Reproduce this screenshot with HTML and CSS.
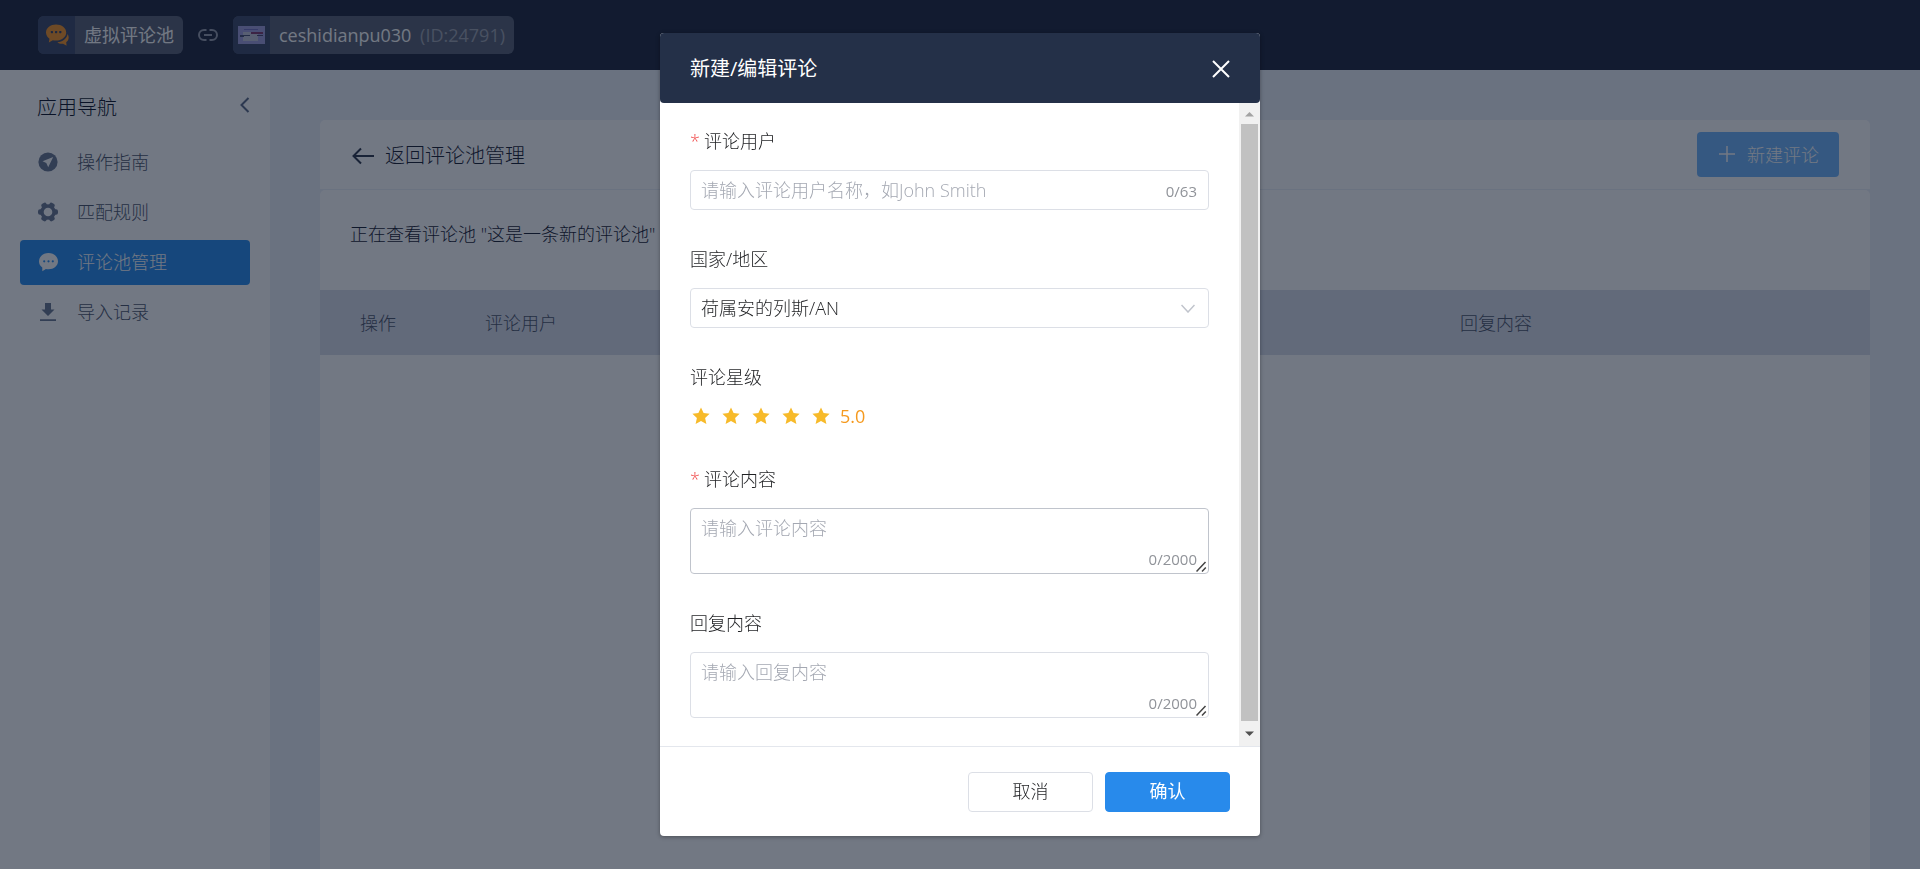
FILE: index.html
```html
<!DOCTYPE html>
<html lang="zh-CN">
<head>
<meta charset="utf-8">
<meta name="viewport" content="width=device-width, initial-scale=1">
<title>虚拟评论池</title>
<link rel="stylesheet" href="styles.css">
</head>
<body>
<div class="app">
  <header class="topbar">
    <div class="chip">
      <span class="chip-icon">
        <svg width="24" height="24" viewBox="0 0 24 24" fill="#f5962a"><path d="M11 1.500C5.500 1.500 1 4.900 1 9.500c0 2.600 1.400 4.700 3.500 6.200L3.800 19.500 7.800 17.200c1 .3 2.100.4 3.200.4 5.700 0 10.200-3.500 10.200-8.100S16.700 1.500 11 1.500z"/><path d="M22.600 11c-.8 4.600-5 7.800-10.200 8.200 1.300 1.300 3.500 1.800 5.600 1.500l3.600 2-.4-3.400c2.600-2 3.300-5.500 1.400-8.300z"/><g fill="#3d486a"><rect x="5.800" y="8" width="2.200" height="2.200" rx=".6"/><rect x="10" y="8" width="2.200" height="2.200" rx=".6"/><rect x="14.200" y="8" width="2.200" height="2.200" rx=".6"/></g></svg>
      </span>
      <span class="chip-text">虚拟评论池</span>
    </div>
    <svg class="link-icon" width="20" height="12" viewBox="0 0 20 12" fill="none" stroke="#9a9fae" stroke-width="2"><path d="M8.500 1H6a5 5 0 0 0 0 10h2.500M11.500 1H14a5 5 0 0 1 0 10h-2.500M6 6h8"/></svg>
    <div class="chip">
      <span class="chip-icon">
        <svg width="27" height="18" viewBox="0 0 27 18"><path fill="#a09fdc" d="M0 0h27v18H0z"/><path fill="#7674c4" d="M6 3h14v1H6z"/><path fill="#c4c6d8" d="M5 6h15v9H5z"/><path fill="#4d5478" d="M2 9h4v2H2zM6 9h6v1H6z"/><path fill="#843e70" d="M13 6h12v2H13z"/><path fill="#4f4a70" d="M19 9h6v1h-6z"/></svg>
      </span>
      <span class="chip-text">ceshidianpu030 <span class="chip-id">(ID:24791)</span></span>
    </div>
  </header>

  <div class="main">
    <aside class="sidebar">
      <div class="sidebar-head">
        <h2 class="sidebar-title">应用导航</h2>
        <button class="icon-button" type="button" aria-label="收起">
          <svg width="11" height="18" viewBox="0 0 11 18" fill="none" stroke="#5f6d8a" stroke-width="2"><path d="M9.500 2 2.500 9l7 7"/></svg>
        </button>
      </div>
      <nav class="nav">
        <a class="nav-item" href="#guide">
          <svg width="20" height="20" viewBox="0 0 20 20"><circle cx="10" cy="10" r="9.600" fill="#6d7a94"/><path fill="#fff" d="M15.200 5 4.500 9.300l3.800 1.600 1.900 4.300z"/></svg>
          操作指南</a>
        <a class="nav-item" href="#rules">
          <svg width="20" height="20" viewBox="0 0 20 20"><g fill="#6d7a94"><circle cx="10" cy="10" r="7.800"/><rect x="7.200" y="0" width="5.600" height="20" rx="2" transform="rotate(30 10 10)"/><rect x="7.200" y="0" width="5.600" height="20" rx="2" transform="rotate(90 10 10)"/><rect x="7.200" y="0" width="5.600" height="20" rx="2" transform="rotate(150 10 10)"/></g><circle cx="10" cy="10" r="4.300" fill="#fff"/></svg>
          匹配规则</a>
        <a class="nav-item nav-item-active" href="#pool" aria-current="page">
          <svg width="20" height="20" viewBox="0 0 20 20"><path fill="#fff" d="M10.500 1C5.200 1 1 4.600 1 9.200c0 2.700 1.300 4.900 3.300 6.300v3.700l3.600-2.300c.8.200 1.700.3 2.600.3 5.300 0 9.500-3.500 9.500-8S15.800 1 10.500 1z"/><g fill="#2d8fee"><circle cx="6.200" cy="9.300" r="1.100"/><circle cx="10.500" cy="9.300" r="1.100"/><circle cx="14.800" cy="9.300" r="1.100"/></g></svg>
          评论池管理</a>
        <a class="nav-item" href="#import">
          <svg width="20" height="20" viewBox="0 0 20 20" fill="#6d7a94"><path d="M7 1h6v6.500h3.500L10 14 3.500 7.500H7zM2 17.200h16v1.800H2z"/></svg>
          导入记录</a>
      </nav>
    </aside>

    <main class="content">
      <section class="panel panel-head">
        <a class="back" href="#pool">
          <svg width="24" height="18" viewBox="0 0 24 18" fill="none" stroke="#333d50" stroke-width="2"><path d="M23 9H3M10 1.500 2.500 9l7.500 7.500"/></svg>
          返回评论池管理</a>
        <button class="add-button" type="button">
          <svg width="16" height="16" viewBox="0 0 16 16" fill="none" stroke="#fff" stroke-width="1.500"><path d="M8 0v16M0 8h16"/></svg>
          新建评论</button>
      </section>
      <section class="panel panel-body">
        <p class="viewing">正在查看评论池 "这是一条新的评论池"</p>
        <table class="table">
          <thead>
            <tr><th class="col-action">操作</th><th class="col-user">评论用户</th><td></td><th class="col-reply">回复内容</th></tr>
          </thead>
        </table>
      </section>
    </main>
  </div>
</div>

<div class="overlay">
  <form class="dialog" role="dialog" aria-modal="true" aria-labelledby="dialog-title">
    <header class="dialog-head">
      <h1 class="dialog-title" id="dialog-title">新建/编辑评论</h1>
      <button class="icon-button" type="button" aria-label="关闭">
        <svg width="18" height="18" viewBox="0 0 18 18" fill="none" stroke="#fff" stroke-width="2"><path d="m1 1 16 16M17 1 1 17"/></svg>
      </button>
    </header>
    <div class="dialog-main">
      <div class="fields">
        <div class="field">
          <label class="label required" for="user">评论用户</label>
          <div class="control">
            <input class="box" id="user" type="text" maxlength="63" placeholder="请输入评论用户名称，如John Smith">
            <span class="count count-middle">0/63</span>
          </div>
        </div>
        <div class="field">
          <label class="label" for="country">国家/地区</label>
          <div class="control">
            <select class="box" id="country"><option>荷属安的列斯/AN</option></select>
            <svg class="caret" width="14" height="9" viewBox="0 0 14 9" fill="none" stroke="#c0c4cc" stroke-width="1.500"><path d="m.5 1 6.500 7 6.500-7"/></svg>
          </div>
        </div>
        <fieldset class="field">
          <legend class="label">评论星级</legend>
          <div class="stars">
            <label class="star"><input class="star-input" type="radio" name="stars" aria-label="1 星"><svg width="18" height="18" viewBox="0 0 18 18"><path d="m9 .5 2.600 5.600 6 .7-4.500 4.100 1.300 6.100L9 14l-5.400 3 1.300-6.100L.4 6.800l6-.7z"/></svg></label>
            <label class="star"><input class="star-input" type="radio" name="stars" aria-label="2 星"><svg width="18" height="18" viewBox="0 0 18 18"><path d="m9 .5 2.600 5.600 6 .7-4.500 4.100 1.300 6.100L9 14l-5.400 3 1.300-6.100L.4 6.800l6-.7z"/></svg></label>
            <label class="star"><input class="star-input" type="radio" name="stars" aria-label="3 星"><svg width="18" height="18" viewBox="0 0 18 18"><path d="m9 .5 2.600 5.600 6 .7-4.500 4.100 1.300 6.100L9 14l-5.400 3 1.300-6.100L.4 6.800l6-.7z"/></svg></label>
            <label class="star"><input class="star-input" type="radio" name="stars" aria-label="4 星"><svg width="18" height="18" viewBox="0 0 18 18"><path d="m9 .5 2.600 5.600 6 .7-4.500 4.100 1.300 6.100L9 14l-5.400 3 1.300-6.100L.4 6.800l6-.7z"/></svg></label>
            <label class="star"><input class="star-input" type="radio" name="stars" aria-label="5 星" checked><svg width="18" height="18" viewBox="0 0 18 18"><path d="m9 .5 2.600 5.600 6 .7-4.500 4.100 1.300 6.100L9 14l-5.400 3 1.300-6.100L.4 6.800l6-.7z"/></svg></label>
            <span class="score">5.0</span>
          </div>
        </fieldset>
        <div class="field">
          <label class="label required" for="comment">评论内容</label>
          <div class="control">
            <textarea class="box box-area box-hover" id="comment" maxlength="2000" placeholder="请输入评论内容"></textarea>
            <span class="count count-bottom">0/2000</span>
            <svg class="grip" width="11" height="11" viewBox="0 0 11 11" fill="none" stroke="#444" stroke-width="1.500"><path d="M.5 10.500l9-9.500M6 10.500l3.800-4"/></svg>
          </div>
        </div>
        <div class="field">
          <label class="label" for="reply">回复内容</label>
          <div class="control">
            <textarea class="box box-area" id="reply" maxlength="2000" placeholder="请输入回复内容"></textarea>
            <span class="count count-bottom">0/2000</span>
            <svg class="grip" width="11" height="11" viewBox="0 0 11 11" fill="none" stroke="#444" stroke-width="1.500"><path d="M.5 10.500l9-9.500M6 10.500l3.800-4"/></svg>
          </div>
        </div>
      </div>
      <div class="scrollbar" aria-hidden="true">
        <svg width="21" height="21" viewBox="0 0 21 21" fill="#a3a3a3"><path d="M6 13.500h9L10.500 9z"/></svg>
        <span class="thumb"></span>
        <svg width="21" height="25" viewBox="0 0 21 25" fill="#505050"><path d="M6 10.500h9L10.500 15z"/></svg>
      </div>
    </div>
    <footer class="dialog-foot">
      <button class="button" type="button">取消</button>
      <button class="button button-primary" type="submit">确认</button>
    </footer>
  </form>
</div>
</body>
</html>
```

FILE: styles.css
```css
* {
  box-sizing: border-box;
}

body,
h1,
h2,
p,
fieldset,
legend {
  margin: 0;
  padding: 0;
  border: 0;
}

body,
button,
input,
select,
textarea {
  font-family: "Open Sans", "Noto Sans CJK SC", sans-serif;
  font-size: 18px;
  font-weight: 300;
}

body {
  overflow: hidden;
  color: #1f2023;
  line-height: 24px;
}

svg {
  display: block;
  flex: none;
}

.app {
  display: flex;
  flex-direction: column;
  height: 100vh;
}

.topbar {
  display: flex;
  align-items: center;
  gap: 15px;
  height: 70px;
  padding: 0 38px;
  background: #232a40;
}

.chip {
  display: flex;
  height: 38px;
  overflow: hidden;
  border-radius: 6px;
  background: #5d6478;
  color: #fff;
}

.chip-icon {
  display: flex;
  align-items: center;
  justify-content: center;
  width: 37px;
  background: #404c6c;
}

.chip-text {
  padding: 0 9px;
  line-height: 38px;
  font-weight: 400;
}

.chip-id {
  padding-left: 4px;
  color: #a0a5b2;
}

.main {
  display: flex;
  flex: 1;
  min-height: 0;
}

.sidebar {
  width: 270px;
  padding: 20px;
  background: #fff;
}

.sidebar-head {
  display: flex;
  align-items: flex-start;
  justify-content: space-between;
  height: 36px;
  padding: 6px 0 0 17px;
}

.sidebar-title {
  font-size: 20px;
  font-weight: 300;
  color: #10182c;
}

.icon-button {
  padding: 0;
  border: 0;
  background: none;
}

.nav {
  display: flex;
  flex-direction: column;
  gap: 5px;
  margin-top: 14px;
}

.nav-item {
  display: flex;
  align-items: center;
  gap: 19px;
  height: 45px;
  padding: 0 0 1px 18px;
  border-radius: 4px;
  color: #4f586c;
  text-decoration: none;
}

.nav-item-active {
  background: #2d8fee;
  color: #fff;
}

.content {
  display: flex;
  flex-direction: column;
  flex: 1;
  gap: 1px;
  padding: 50px 50px 0;
  background: #ecf0f8;
}

.panel {
  border-radius: 5px 5px 0 0;
  background: #fff;
}

.panel-head {
  display: flex;
  align-items: center;
  justify-content: space-between;
  height: 69px;
  padding: 0 31px;
}

.back {
  display: flex;
  align-items: center;
  gap: 10px;
  padding-top: 2px;
  color: #1c2436;
  font-size: 20px;
  text-decoration: none;
}

.add-button {
  display: flex;
  align-items: center;
  gap: 12px;
  height: 45px;
  padding: 0 20px 2px 22px;
  border: 0;
  border-radius: 4px;
  background: #74b6fb;
  color: #fff;
}

.panel-body {
  flex: 1;
}

.viewing {
  height: 100px;
  padding: 0 30px;
  line-height: 88px;
  color: #1c2436;
}

.table {
  width: 100%;
  border-collapse: collapse;
  table-layout: fixed;
  background: #dadeeb;
  color: #4f586c;
}

.table th {
  height: 65px;
  padding: 0 0 0 20px;
  font-weight: 300;
  text-align: left;
}

.table .col-action {
  width: 145px;
  padding-left: 40px;
}

.col-user {
  width: 160px;
}

.col-reply {
  width: 430px;
}

.overlay {
  position: fixed;
  inset: 0;
  display: flex;
  align-items: center;
  justify-content: center;
  background: rgba(6, 16, 36, 0.566);
}

.dialog {
  display: flex;
  flex-direction: column;
  width: 600px;
  max-width: 100%;
  border-radius: 4px;
  background: #fff;
  box-shadow: 0 1px 4px rgba(0, 0, 0, 0.35);
}

.dialog-head {
  display: flex;
  align-items: center;
  justify-content: space-between;
  height: 70px;
  padding: 2px 30px 0;
  border-radius: 4px;
  background: #243048;
}

.dialog-title {
  color: #fff;
  font-size: 20px;
  font-weight: 400;
}

.dialog-main {
  display: flex;
}

.fields {
  display: flex;
  flex: 1;
  flex-direction: column;
  gap: 37px;
  padding: 26px 30px 28px;
}

.label {
  display: block;
  height: 24px;
  margin-bottom: 17px;
}

.required::before {
  content: "*";
  margin-right: 4px;
  color: #f04c4c;
}

.control {
  position: relative;
}

.box {
  display: block;
  width: 100%;
  height: 40px;
  padding: 0 10px;
  border: 1px solid #dcdfe6;
  border-radius: 4px;
  background: #fff;
  color: #1f2023;
  appearance: none;
  outline: 0;
}

.box::placeholder {
  color: #a4a8b2;
}

.box-area {
  height: 66px;
  padding: 6px 10px;
  line-height: 26px;
  resize: none;
}

.box-hover {
  border-color: #c0c4cc;
}

.count {
  position: absolute;
  right: 12px;
  color: #909399;
  font-size: 15px;
  font-weight: 400;
  line-height: 20px;
}

.count-middle {
  top: 11px;
}

.count-bottom {
  bottom: 5px;
}

.caret {
  position: absolute;
  top: 16px;
  right: 14px;
}

.grip {
  position: absolute;
  right: 2px;
  bottom: 2px;
}

.stars {
  display: flex;
  align-items: flex-start;
  gap: 8px;
  height: 24px;
}

.star {
  position: relative;
  display: flex;
  align-items: center;
  justify-content: center;
  width: 22px;
  height: 20px;
  fill: #f7ba2a;
}

.star-input {
  position: absolute;
  margin: 0;
  opacity: 0;
}

.score {
  color: #f59a1f;
  font-weight: 400;
  line-height: 20px;
}

.scrollbar {
  display: flex;
  flex-direction: column;
  width: 21px;
  background: #f1f1f1;
}

.thumb {
  flex: 1;
  margin: 0 2px;
  background: #c1c1c1;
}

.dialog-foot {
  display: flex;
  justify-content: flex-end;
  gap: 12px;
  padding: 25px 30px 24px;
  border-top: 1px solid #e4e7ed;
}

.button {
  width: 125px;
  height: 40px;
  padding: 0 0 4px;
  border: 1px solid #dcdfe6;
  border-radius: 4px;
  background: #fff;
  color: #1f2023;
}

.button-primary {
  border-color: #288aeb;
  background: #288aeb;
  color: #fff;
  font-weight: 400;
}
```
